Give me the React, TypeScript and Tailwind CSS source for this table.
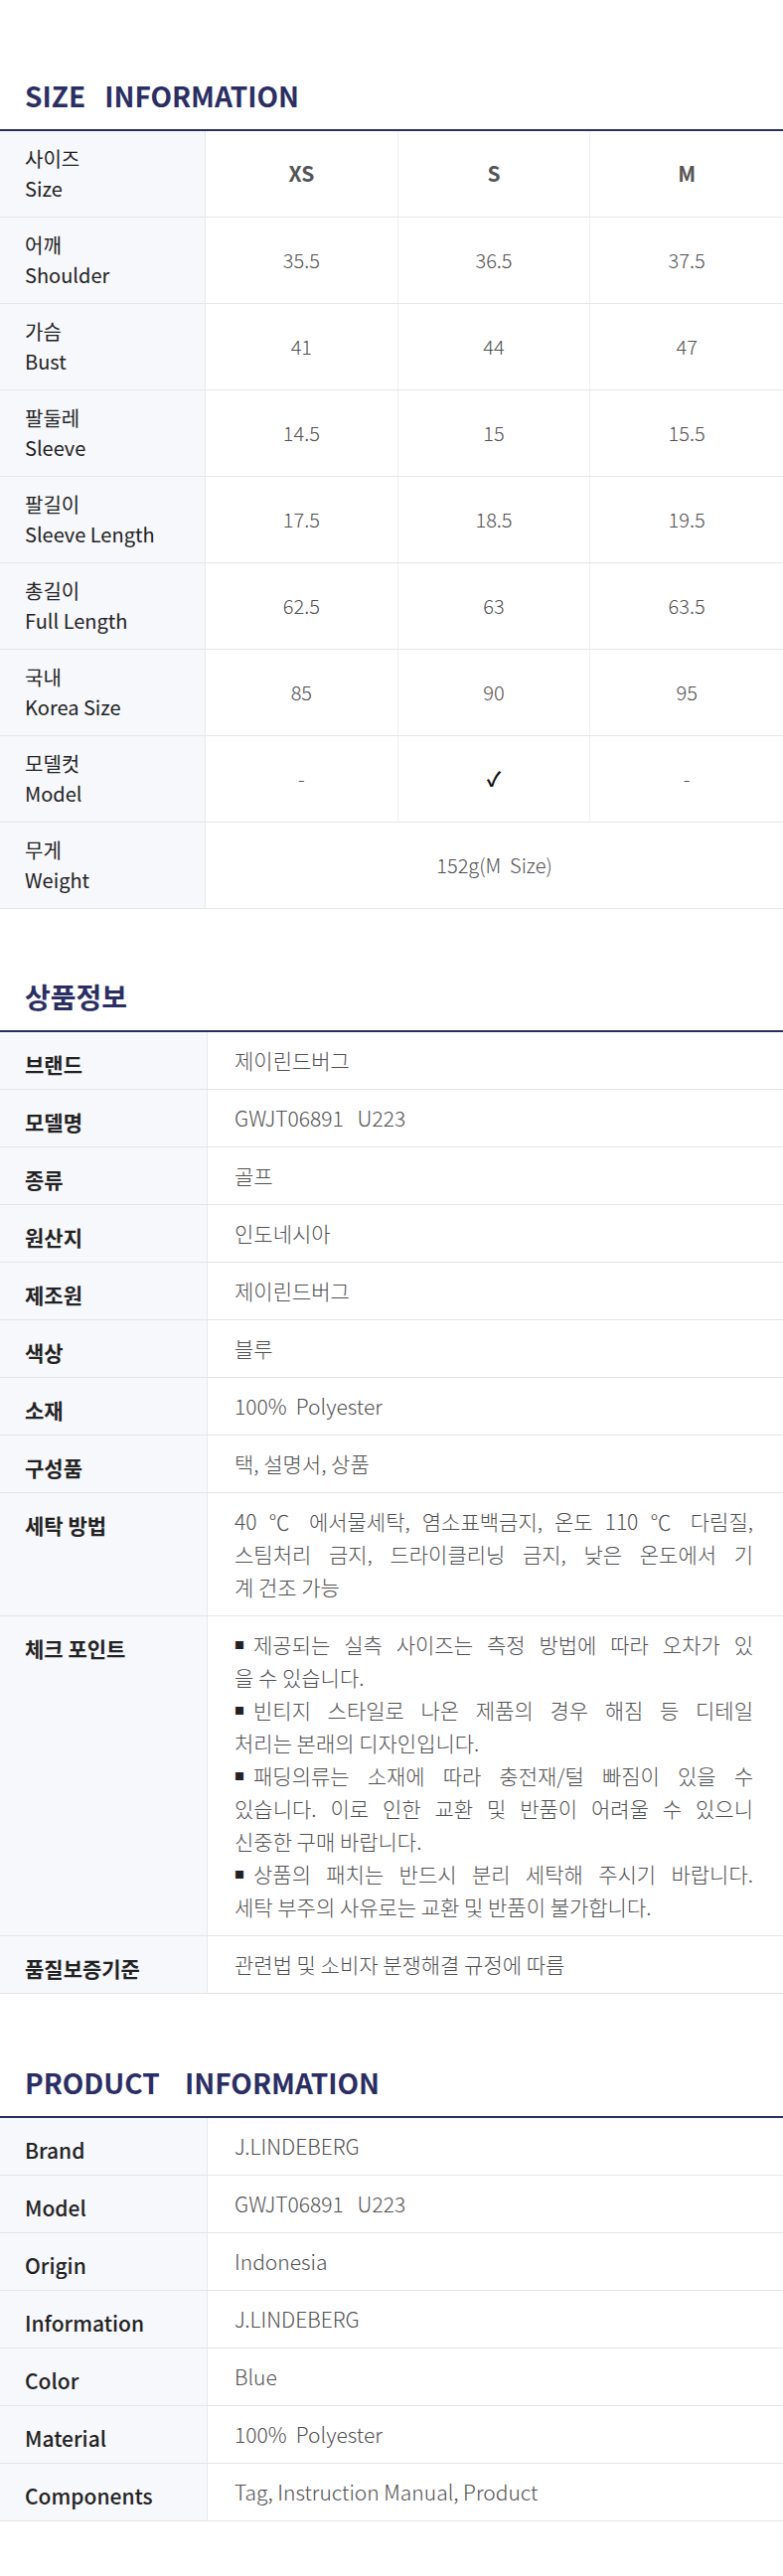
const font = "font-['Noto_Sans_CJK_KR','Noto_Sans',sans-serif]";

const sizeRows = [
  { ko: "어깨", en: "Shoulder", v: ["35.5", "36.5", "37.5"] },
  { ko: "가슴", en: "Bust", v: ["41", "44", "47"] },
  { ko: "팔둘레", en: "Sleeve", v: ["14.5", "15", "15.5"] },
  { ko: "팔길이", en: "Sleeve Length", v: ["17.5", "18.5", "19.5"] },
  { ko: "총길이", en: "Full Length", v: ["62.5", "63", "63.5"] },
  { ko: "국내", en: "Korea Size", v: ["85", "90", "95"] },
  { ko: "모델컷", en: "Model", v: ["-", "✓", "-"] },
];

// each entry is one rendered line; full = stretch to the cell edge
type Line = { t: string; full?: boolean; bullet?: boolean };

const krRows: { label: string; lines: Line[] }[] = [
  { label: "브랜드", lines: [{ t: "제이린드버그" }] },
  { label: "모델명", lines: [{ t: "GWJT06891   U223" }] },
  { label: "종류", lines: [{ t: "골프" }] },
  { label: "원산지", lines: [{ t: "인도네시아" }] },
  { label: "제조원", lines: [{ t: "제이린드버그" }] },
  { label: "색상", lines: [{ t: "블루" }] },
  { label: "소재", lines: [{ t: "100%  Polyester" }] },
  { label: "구성품", lines: [{ t: "택, 설명서, 상품" }] },
  {
    label: "세탁 방법",
    lines: [
      { t: "40 ℃ 에서물세탁, 염소표백금지, 온도 110 ℃ 다림질,", full: true },
      { t: "스팀처리 금지, 드라이클리닝 금지, 낮은 온도에서 기", full: true },
      { t: "계 건조 가능" },
    ],
  },
  {
    label: "체크 포인트",
    lines: [
      { t: "제공되는 실측 사이즈는 측정 방법에 따라 오차가 있", full: true, bullet: true },
      { t: "을 수 있습니다." },
      { t: "빈티지 스타일로 나온 제품의 경우 해짐 등 디테일", full: true, bullet: true },
      { t: "처리는 본래의 디자인입니다." },
      { t: "패딩의류는 소재에 따라 충전재/털 빠짐이 있을 수", full: true, bullet: true },
      { t: "있습니다. 이로 인한 교환 및 반품이 어려울 수 있으니", full: true },
      { t: "신중한 구매 바랍니다." },
      { t: "상품의 패치는 반드시 분리 세탁해 주시기 바랍니다.", full: true, bullet: true },
      { t: "세탁 부주의 사유로는 교환 및 반품이 불가합니다." },
    ],
  },
  { label: "품질보증기준", lines: [{ t: "관련법 및 소비자 분쟁해결 규정에 따름" }] },
];

const enRows = [
  { label: "Brand", value: "J.LINDEBERG" },
  { label: "Model", value: "GWJT06891   U223" },
  { label: "Origin", value: "Indonesia" },
  { label: "Information", value: "J.LINDEBERG" },
  { label: "Color", value: "Blue" },
  { label: "Material", value: "100%  Polyester" },
  { label: "Components", value: "Tag, Instruction Manual, Product" },
];

function Title({ children }: { children: React.ReactNode }) {
  return (
    <h2 className="pl-[25px] mb-[20px] text-[28px] leading-none font-bold text-[#2b2e63] whitespace-pre">
      {children}
    </h2>
  );
}

function InfoRow({ label, children, labelBold }: { label: string; children: React.ReactNode; labelBold?: boolean }) {
  return (
    <div className="grid grid-cols-[209px_1fr] border-b border-[#e4e4e4]">
      <div
        className={`bg-[#f7f8fc] border-r border-[#e8e8e8] pl-[25px] pt-[16px] text-[21px] leading-[33px] text-[#222] ${labelBold ? "font-bold" : "font-medium"}`}
      >
        {label}
      </div>
      <div className="pl-[27px] pr-[30px] pt-[12px] pb-[12px] text-[21px] leading-[33px] font-light text-[#505050]">
        {children}
      </div>
    </div>
  );
}

export default function App() {
  return (
    <div className={`w-[788px] min-h-[2593px] bg-white pt-[82px] ${font}`}>
      {/* SIZE INFORMATION */}
      <Title>{"SIZE   INFORMATION"}</Title>
      <div className="border-t-2 border-[#2b2e63]">
        <div className="grid grid-cols-[207px_1fr_1fr_1fr] h-[87px] border-b border-[#e6e6e6]">
          <div className="bg-[#f7f8fc] border-r border-[#e8e8e8] pl-[25px] flex flex-col justify-center text-[20px] leading-[30px] text-[#222]">
            <span>사이즈</span>
            <span>Size</span>
          </div>
          {["XS", "S", "M"].map((s, i) => (
            <div
              key={s}
              className={`flex items-center justify-center text-[21px] font-bold text-[#555] ${i < 2 ? "border-r border-[#efefef]" : ""}`}
            >
              {s}
            </div>
          ))}
        </div>
        {sizeRows.map((r) => (
          <div key={r.ko} className="grid grid-cols-[207px_1fr_1fr_1fr] h-[87px] border-b border-[#e6e6e6]">
            <div className="bg-[#f7f8fc] border-r border-[#e8e8e8] pl-[25px] flex flex-col justify-center text-[20px] leading-[30px] text-[#222]">
              <span>{r.ko}</span>
              <span>{r.en}</span>
            </div>
            {r.v.map((v, i) => (
              <div
                key={i}
                className={`flex items-center justify-center text-[20px] ${v === "✓" ? "font-bold text-[#111]" : "font-light text-[#505050]"} ${i < 2 ? "border-r border-[#efefef]" : ""}`}
              >
                {v}
              </div>
            ))}
          </div>
        ))}
        <div className="grid grid-cols-[207px_1fr] h-[87px] border-b border-[#e6e6e6]">
          <div className="bg-[#f7f8fc] border-r border-[#e8e8e8] pl-[25px] flex flex-col justify-center text-[20px] leading-[30px] text-[#222]">
            <span>무게</span>
            <span>Weight</span>
          </div>
          <div className="flex items-center justify-center text-[20px] font-light text-[#505050] whitespace-pre">
            {"152g(M  Size)"}
          </div>
        </div>
      </div>

      {/* 상품정보 */}
      <div className="mt-[74px]">
        <Title>상품정보</Title>
        <div className="border-t-2 border-[#2b2e63]">
          {krRows.map((r) => (
            <InfoRow key={r.label} label={r.label} labelBold>
              {r.lines.map((l, i) => (
                <div
                  key={i}
                  className={`whitespace-pre-wrap ${l.full ? "text-justify [text-align-last:justify]" : ""}`}
                >
                  {l.bullet && (
                    <span className="inline-block align-middle leading-none text-[10px] text-[#222] mr-[9px] -mt-[4px]">■</span>
                  )}
                  {l.t}
                </div>
              ))}
            </InfoRow>
          ))}
        </div>
      </div>

      {/* PRODUCT INFORMATION */}
      <div className="mt-[75px] pb-[59px]">
        <Title>{"PRODUCT    INFORMATION"}</Title>
        <div className="border-t-2 border-[#2b2e63]">
          {enRows.map((r) => (
            <InfoRow key={r.label} label={r.label}>
              <div className="whitespace-pre">{r.value}</div>
            </InfoRow>
          ))}
        </div>
      </div>
    </div>
  );
}
